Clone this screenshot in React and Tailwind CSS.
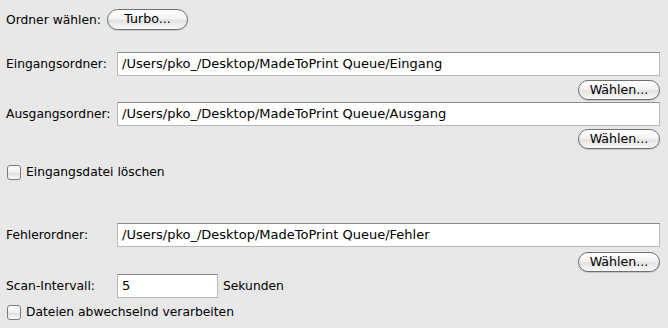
import React from 'react';

const font = "font-['DejaVu_Sans','Liberation_Sans',sans-serif]";
const labelText = 'text-[12.3px] leading-[16px] text-black';

const AquaButton = ({ children, className = '' }) => (
  <button
    className={`h-[20px] rounded-full border border-[#6f6f6f] bg-[linear-gradient(#ffffff,#f3f3f3_45%,#e2e2e2_55%,#fafafa)] text-[12.6px] text-black leading-none shadow-[0_1px_1px_rgba(0,0,0,0.15)] ${className}`}
  >
    {children}
  </button>
);

const PathField = ({ value, className = '' }) => (
  <div
    className={`h-[24px] border border-[#b9b9b9] border-t-[#8a8a8a] bg-white pl-[4px] flex items-center text-[13px] leading-[16px] text-black ${className}`}
  >
    {value}
  </div>
);

const Checkbox = ({ label, className = '' }) => (
  <label className={`flex items-center h-[16px] gap-[5px] pl-[7px] ${className}`}>
    <span className="w-[14px] h-[15px] rounded-[3px] border border-[#7a7a7a] bg-[linear-gradient(#ffffff,#eeeeee_50%,#dedede_55%,#fbfbfb)]" />
    <span className={labelText}>{label}</span>
  </label>
);

const FolderRow = ({ label, value, className = '' }) => (
  <div className={`flex items-center ${className}`}>
    <span className={`w-[117px] pl-[6px] shrink-0 ${labelText}`}>{label}</span>
    <PathField value={value} className="w-[543px]" />
  </div>
);

export default function App() {
  const base = '/Users/pko_/Desktop/MadeToPrint Queue/';

  return (
    <div className={`w-[668px] h-[328px] bg-[#e8e8e8] ${font} flex flex-col`}>
      <div className="flex items-center mt-[9px] h-[21px]">
        <span className={`pl-[6px] w-[107px] shrink-0 ${labelText}`}>Ordner wählen:</span>
        <AquaButton className="w-[81px] h-[21px]">Turbo...</AquaButton>
      </div>

      <FolderRow label="Eingangsordner:" value={base + 'Eingang'} className="mt-[22px]" />
      <div className="flex justify-end pr-[8px] mt-[4px]">
        <AquaButton className="w-[82px]">Wählen...</AquaButton>
      </div>

      <FolderRow label="Ausgangsordner:" value={base + 'Ausgang'} className="mt-[2px]" />
      <div className="flex justify-end pr-[8px] mt-[3px]">
        <AquaButton className="w-[82px]">Wählen...</AquaButton>
      </div>

      <Checkbox label="Eingangsdatei löschen" className="mt-[15px]" />

      <FolderRow label="Fehlerordner:" value={base + 'Fehler'} className="mt-[43px]" />
      <div className="flex justify-end pr-[8px] mt-[5px]">
        <AquaButton className="w-[82px]">Wählen...</AquaButton>
      </div>

      <div className="flex items-center mt-[2px]">
        <span className={`w-[117px] pl-[6px] shrink-0 ${labelText}`}>Scan-Intervall:</span>
        <PathField value="5" className="w-[101px]" />
        <span className={`pl-[5px] ${labelText}`}>Sekunden</span>
      </div>

      <Checkbox label="Dateien abwechselnd verarbeiten" className="mt-[6px]" />
    </div>
  );
}
